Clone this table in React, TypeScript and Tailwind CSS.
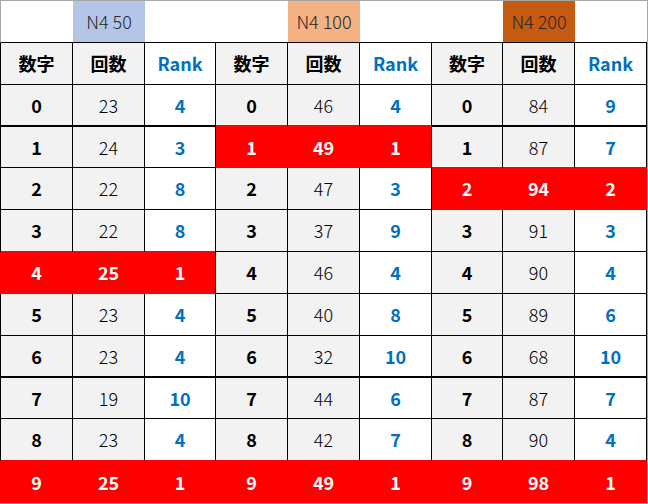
import React from 'react';

const FONT = "font-['Noto_Sans_CJK_JP','Noto_Sans',sans-serif]";

const WIDTHS = ['w-[72px]', 'w-[72px]', 'w-[71px]', 'w-[72px]', 'w-[72px]', 'w-[72px]', 'w-[71px]', 'w-[72px]', 'flex-1'];

const GROUPS = [
  { title: 'N4 50', bg: 'bg-[#b4c6e7]', counts: [23, 24, 22, 22, 25, 23, 23, 19, 23, 25], ranks: [4, 3, 8, 8, 1, 4, 4, 10, 4, 1], red: [4, 9] },
  { title: 'N4 100', bg: 'bg-[#f4b183]', counts: [46, 49, 47, 37, 46, 40, 32, 44, 42, 49], ranks: [4, 1, 3, 9, 4, 8, 10, 6, 7, 1], red: [1, 9] },
  { title: 'N4 200', bg: 'bg-[#c55a11]', counts: [84, 87, 94, 91, 90, 89, 68, 87, 90, 98], ranks: [9, 7, 2, 3, 4, 6, 10, 7, 4, 1], red: [2, 9] },
];

// data row heights (incl. bottom border); row 9 takes the rest
const ROW_H = ['h-[42px]', 'h-[41px]', 'h-[42px]', 'h-[42px]', 'h-[42px]', 'h-[42px]', 'h-[42px]', 'h-[41px]', 'h-[42px]', 'flex-1'];

const isRed = (r: number, c: number) => r >= 0 && r < 10 && c < 9 && GROUPS[Math.floor(c / 3)].red.includes(r);

function cellText(r: number, c: number) {
  const g = GROUPS[Math.floor(c / 3)];
  if (c % 3 === 0) return r;
  if (c % 3 === 1) return g.counts[r];
  return g.ranks[r];
}

export default function App() {
  return (
    <div className={`w-[648px] h-[504px] bg-white flex flex-col border-t border-r border-b border-[#a6a6a6] ${FONT}`}>
      {/* group titles */}
      <div className="flex h-[42px] border-l border-b border-l-[#a6a6a6] border-b-black">
        {WIDTHS.map((w, c) => {
          const g = GROUPS[Math.floor(c / 3)];
          const titled = c % 3 === 1;
          return (
            <div key={c} className={`${w} flex items-center justify-center text-[18px] font-light text-[#262626] ${titled ? g.bg : ''}`}>
              {titled ? g.title : ''}
            </div>
          );
        })}
      </div>

      {/* column headers */}
      <div className="flex h-[42px] border-l border-black">
        {WIDTHS.map((w, c) => (
          <div
            key={c}
            className={`${w} flex items-center justify-center border-r border-b border-black text-[18px] font-bold ${
              c % 3 === 2 ? 'bg-white text-[#0070c0]' : 'bg-[#f2f2f2] text-black'
            }`}
          >
            {c % 3 === 0 ? '数字' : c % 3 === 1 ? '回数' : 'Rank'}
          </div>
        ))}
      </div>

      {/* data rows */}
      {ROW_H.map((h, r) => {
        const thick = r === 0 || r === 6;
        return (
          <div key={r} className={`flex ${h} border-l ${isRed(r, 0) ? 'border-l-[#ff0000]' : 'border-l-black'}`}>
            {WIDTHS.map((w, c) => {
              const red = isRed(r, c);
              const rightRed = red && (c === 8 || isRed(r, c + 1));
              const bottomRed = red || isRed(r + 1, c);
              const kind = c % 3;
              let look = '';
              if (red) look = 'bg-[#ff0000] text-white font-bold';
              else if (kind === 0) look = 'bg-[#f2f2f2] text-black font-bold';
              else if (kind === 1) look = 'bg-[#f2f2f2] text-black font-light';
              else look = 'bg-white text-[#0070c0] font-bold';
              return (
                <div
                  key={c}
                  className={`${w} flex items-center justify-center text-[18px] border-r ${
                    r === 9 ? '' : thick ? 'border-b-2' : 'border-b'
                  } ${rightRed ? 'border-r-[#ff0000]' : 'border-r-black'} ${
                    bottomRed ? 'border-b-[#ff0000]' : 'border-b-black'
                  } ${look}`}
                >
                  {cellText(r, c)}
                </div>
              );
            })}
          </div>
        );
      })}
    </div>
  );
}
